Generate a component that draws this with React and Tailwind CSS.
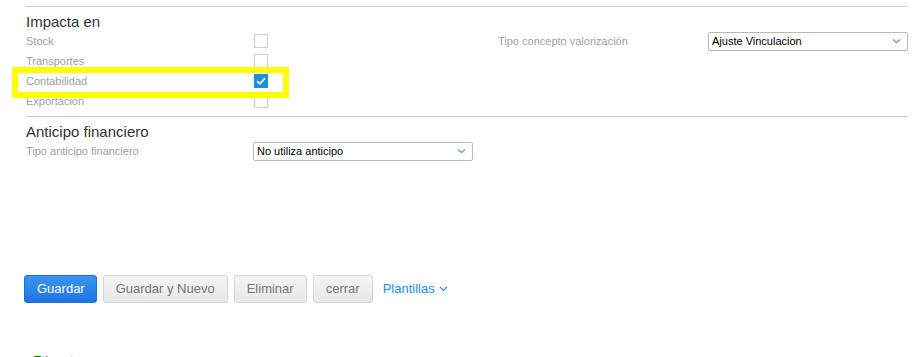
const font = { fontFamily: '"Liberation Sans", Arial, sans-serif' };

const Checkbox = ({ checked }) =>
  checked ? (
    <span className="w-[14px] h-[14px] bg-[#1b8ee0] border border-[#1b8ee0] flex items-center justify-center">
      <svg width="10" height="8" viewBox="0 0 10 8">
        <path d="M1 4.2 L3.8 6.8 L9 1.2" fill="none" stroke="#fff" strokeWidth="1.8" />
      </svg>
    </span>
  ) : (
    <span className="w-[14px] h-[14px] bg-white border border-[#cfcfcf] block" />
  );

const Select = ({ value, width }) => (
  <div
    className={`${width} h-[19px] border border-[#b8b8b8] rounded-[2px] bg-white flex items-center justify-between pl-[3px] pr-[6px]`}
  >
    <span className="text-[11px] text-black leading-none">{value}</span>
    <svg width="9" height="6" viewBox="0 0 9 6">
      <path d="M1 1.5 L4.5 4.5 L8 1.5" fill="none" stroke="#5f9bd8" strokeWidth="1.2" />
    </svg>
  </div>
);

const CheckRow = ({ label, checked, highlight }) => (
  <div className="relative h-[20px] flex items-center">
    {highlight && (
      <div className="absolute left-[-14px] top-[-4px] w-[277px] h-[31px] border-[6px] border-[#ffff00] bg-white" />
    )}
    <span className="relative w-[228px] text-[11px] text-[#a0a0a0]">{label}</span>
    <span className="relative">
      <Checkbox checked={checked} />
    </span>
  </div>
);

export default function App() {
  return (
    <div className="w-[917px] h-[357px] overflow-hidden bg-white" style={font}>
      <div className="ml-[26px] mr-[9px] pt-[6px]">
        <div className="border-t border-[#cccccc]" />
        <div className="pt-[6px] h-[24px] text-[15px] leading-[18px] text-[#333]">Impacta en</div>
        <div className="flex">
          <div className="w-[473px]">
            <CheckRow label="Stock" />
            <CheckRow label="Transportes" />
            <div className="relative z-10">
              <CheckRow label="Contabilidad" checked highlight />
            </div>
            <CheckRow label="Exportacion" />
          </div>
          <div className="flex-1">
            <div className="h-[20px] flex items-center">
              <span className="w-[210px] text-[11px] text-[#a0a0a0]">Tipo concepto valorización</span>
              <Select value="Ajuste Vinculacion" width="w-[200px]" />
            </div>
          </div>
        </div>
        <div className="mt-[5px] border-t border-[#cccccc]" />
        <div className="pt-[6px] h-[24px] text-[15px] leading-[18px] text-[#333]">Anticipo financiero</div>
        <div className="h-[20px] flex items-center">
          <span className="w-[227px] text-[11px] text-[#a0a0a0]">Tipo anticipo financiero</span>
          <Select value="No utiliza anticipo" width="w-[220px]" />
        </div>
      </div>

      <div className="ml-[24px] mt-[114px] flex items-center gap-[6px]">
        <button className="h-[28px] pl-[12px] pr-[11px] rounded-[3px] border border-[#1c6fd8] bg-gradient-to-b from-[#3d93f2] to-[#1f74e2] text-white text-[13px]">
          Guardar
        </button>
        <button className="h-[28px] px-[12px] rounded-[3px] border border-[#d6d6d6] bg-gradient-to-b from-[#f4f4f4] to-[#e8e8e8] text-[#777] text-[13px]">
          Guardar y Nuevo
        </button>
        <button className="h-[28px] px-[12px] rounded-[3px] border border-[#d6d6d6] bg-gradient-to-b from-[#f4f4f4] to-[#e8e8e8] text-[#777] text-[13px]">
          Eliminar
        </button>
        <button className="h-[28px] px-[12px] rounded-[3px] border border-[#d6d6d6] bg-gradient-to-b from-[#f4f4f4] to-[#e8e8e8] text-[#777] text-[13px]">
          cerrar
        </button>
        <button className="ml-[4px] flex items-center gap-[4px] text-[13px] text-[#1d8cf0]">
          Plantillas
          <svg width="9" height="6" viewBox="0 0 9 6">
            <path d="M1 1 L4.5 4.5 L8 1" fill="none" stroke="#1d8cf0" strokeWidth="1.1" />
          </svg>
        </button>
      </div>

      <div className="ml-[33px] mt-[50px] text-[13px] leading-[16px] text-[#008000]">Etiquetas</div>
    </div>
  );
}
